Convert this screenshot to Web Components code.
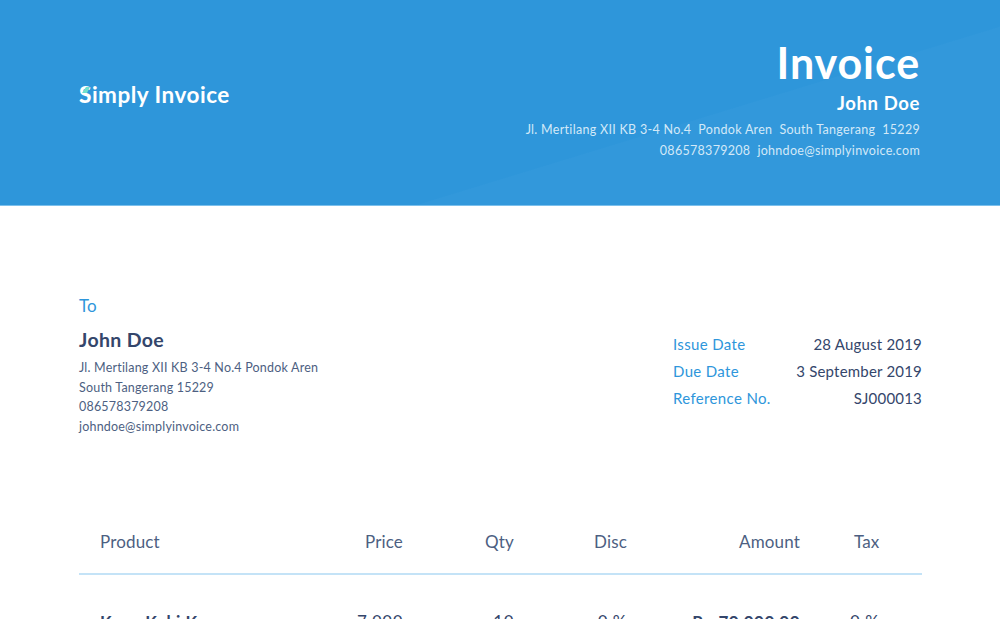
<!DOCTYPE html>
<html>
<head>
<meta charset="utf-8">
<title>Simply Invoice</title>
<style>
  html, body { margin: 0; height: 100%; overflow: hidden; background: #fff; }
  body { font-family: Lato, "Noto Sans", sans-serif; color: #34466b; }
</style>
</head>
<body>
<invoice-header></invoice-header>
<invoice-meta></invoice-meta>
<invoice-table></invoice-table>

<script>
class InvoiceHeader extends HTMLElement {
  connectedCallback() {
    this.attachShadow({ mode: 'open' });
    this.shadowRoot.innerHTML = `
      <style>
        :host {
          display: flex;
          justify-content: space-between;
          align-items: center;
          box-sizing: border-box;
          height: 206px;
          padding: 0 80px 8px 79px;
          color: #fff;
          background: linear-gradient(163deg, #2e96da 0%, #2e96da 65%, #3298db 65.2%, #3298db 100%);
          border-bottom: 1px solid #7cc0ec;
        }
        .logo { display: flex; align-items: center; margin-bottom: 8px; font-size: 22.5px; font-weight: 700; letter-spacing: .5px; }
        .mark { position: relative; display: inline-block; font-weight: 900; }
        .mark svg { position: absolute; left: 3px; top: 6px; width: 8px; height: 6px; }
        .right { text-align: right; }
        h1 { margin: 0; font-size: 43px; line-height: 51px; font-weight: 700; letter-spacing: .9px; }
        h2 { margin: 4px 0 5px; font-size: 18.5px; line-height: 22px; font-weight: 700; letter-spacing: .6px; }
        p { margin: 0; font-size: 12.5px; line-height: 21px; color: #d3e9f8; white-space: pre; letter-spacing: .3px; }
      </style>
      <div class="logo">
        <span class="mark">S<svg viewBox="0 0 8 6"><path d="M0 6 L4 0 H8 L5 6 Z" fill="#6fe0cf"/></svg></span>imply Invoice
      </div>
      <div class="right">
        <h1>Invoice</h1>
        <h2>John Doe</h2>
        <p>Jl. Mertilang XII KB 3-4 No.4  Pondok Aren  South Tangerang  15229</p>
        <p>086578379208  johndoe@simplyinvoice.com</p>
      </div>
    `;
  }
}
customElements.define('invoice-header', InvoiceHeader);

class InvoiceMeta extends HTMLElement {
  connectedCallback() {
    this.attachShadow({ mode: 'open' });
    this.shadowRoot.innerHTML = `
      <style>
        :host {
          display: flex;
          justify-content: space-between;
          align-items: flex-start;
          padding: 90px 78px 0 79px;
          height: 302px;
          box-sizing: border-box;
        }
        .to { font-size: 17px; line-height: 20px; color: #2e96db; margin-bottom: 12px; }
        .name { font-size: 19.5px; line-height: 24px; font-weight: 700; color: #34466b; margin-bottom: 6px; letter-spacing: .35px; }
        .addr { font-size: 12.5px; line-height: 19.6px; color: #4d5f82; letter-spacing: .2px; }
        dl { margin: 34.5px 0 0; display: grid; grid-template-columns: 1fr auto; width: 249px; }
        dt { font-size: 15px; line-height: 27px; color: #2e96db; letter-spacing: .35px; }
        dd { margin: 0; font-size: 15px; line-height: 27px; color: #34466b; text-align: right; letter-spacing: .2px; }
      </style>
      <div>
        <div class="to">To</div>
        <div class="name">John Doe</div>
        <div class="addr">Jl. Mertilang XII KB 3-4 No.4 Pondok Aren<br>South Tangerang 15229<br>086578379208<br>johndoe@simplyinvoice.com</div>
      </div>
      <dl>
        <dt>Issue Date</dt><dd>28 August 2019</dd>
        <dt>Due Date</dt><dd>3 September 2019</dd>
        <dt>Reference No.</dt><dd>SJ000013</dd>
      </dl>
    `;
  }
}
customElements.define('invoice-meta', InvoiceMeta);

class InvoiceTable extends HTMLElement {
  connectedCallback() {
    this.attachShadow({ mode: 'open' });
    const cols = '241px 62px 111px 113px 173px 1fr';
    this.shadowRoot.innerHTML = `
      <style>
        :host { display: block; margin: 0 78px 0 79px; font-size: 17px; letter-spacing: .15px; }
        .row { display: grid; grid-template-columns: ${cols}; padding-left: 21px; }
        .head { height: 67px; padding-top: 1px; align-items: center; border-bottom: 2px solid #c4e3f7; box-sizing: border-box; color: #4d5f82; }
        .body { margin-top: 37px; color: #34466b; line-height: 20px; letter-spacing: .5px; }
        .r { text-align: right; }
        .tax { padding-left: 54px; }
        .body .tax { padding-left: 50px; }
        b { font-weight: 700; }
      </style>
      <div class="row head">
        <span>Product</span><span class="r">Price</span><span class="r">Qty</span>
        <span class="r">Disc</span><span class="r">Amount</span><span class="tax">Tax</span>
      </div>
      <div class="row body">
        <b>Kayu Kaki K</b><span class="r">7.000</span><span class="r">10</span>
        <span class="r">0 %</span><b class="r">Rp 70.000,00</b><span class="tax">0 %</span>
      </div>
    `;
  }
}
customElements.define('invoice-table', InvoiceTable);
</script>
</body>
</html>
